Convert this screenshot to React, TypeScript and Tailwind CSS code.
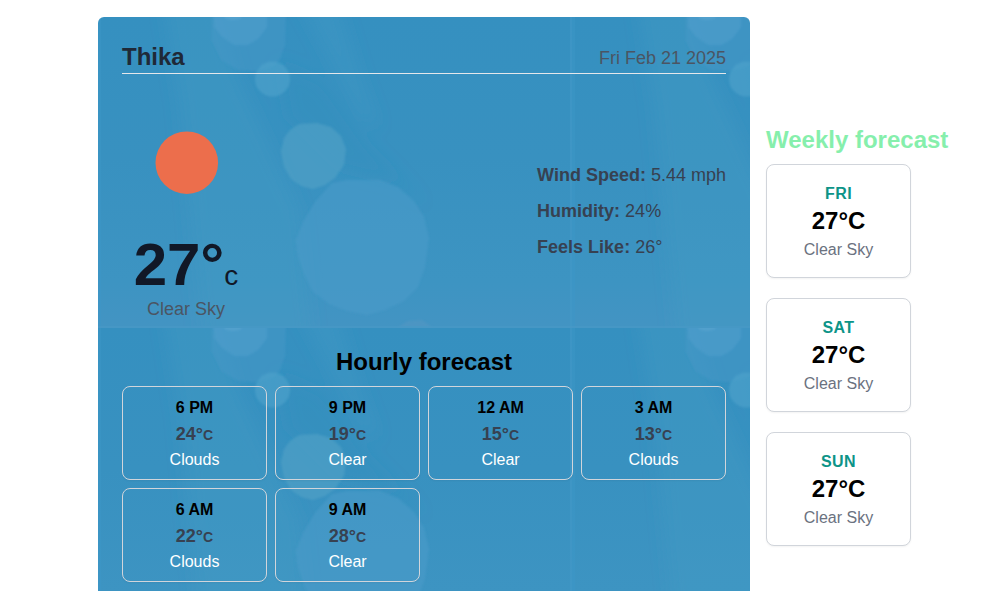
import React from "react";

type Hour = { time: string; temp: number; sky: string };

const hours: Hour[] = [
  { time: "6 PM", temp: 24, sky: "Clouds" },
  { time: "9 PM", temp: 19, sky: "Clear" },
  { time: "12 AM", temp: 15, sky: "Clear" },
  { time: "3 AM", temp: 13, sky: "Clouds" },
  { time: "6 AM", temp: 22, sky: "Clouds" },
  { time: "9 AM", temp: 28, sky: "Clear" },
];

const days = ["FRI", "SAT", "SUN"];

// Repeating blue bokeh backdrop behind the main panel.
function Backdrop() {
  return (
    <svg className="absolute inset-0 h-full w-full" aria-hidden="true">
      <defs>
        <linearGradient id="sky" x1="0" y1="0" x2="0" y2="1">
          <stop offset="0" stopColor="#3590c0" />
          <stop offset="0.45" stopColor="#3891c0" />
          <stop offset="0.85" stopColor="#3d94c2" />
          <stop offset="1" stopColor="#4394c3" />
        </linearGradient>
        <filter id="soft" x="-10%" y="-10%" width="120%" height="120%">
          <feGaussianBlur stdDeviation="1.2" />
        </filter>
        <filter id="haze" x="-30%" y="-10%" width="160%" height="120%">
          <feGaussianBlur stdDeviation="8" />
        </filter>
        <pattern id="tile" width="474" height="311" patternUnits="userSpaceOnUse">
          <rect width="474" height="311" fill="url(#sky)" />
          <g filter="url(#haze)">
            <path d="M65 -20H118L140 60L200 190L215 330H105L82 90Z" fill="#459bc5" opacity="0.34" />
            <path d="M198 -20H238L262 60L280 110L262 100L236 50Z" fill="#459bc5" opacity="0.35" />
            <path d="M180 45L225 65L270 130L330 190L300 165L240 150L190 100Z" fill="#2f8bbb" opacity="0.28" />
          </g>
          <g filter="url(#soft)">
            <path d="M114 -10H188L187 28L182 42L176 50L158 54L140 53L124 44L114 24Z" fill="#4597c8" opacity="0.5" />
            <path d="M115 -8H169V10L160 22L150 28L136 28L124 20L116 10Z" fill="#509fcb" opacity="0.6" />
            <ellipse cx="135" cy="0" rx="9" ry="3" fill="#64b0d6" opacity="0.35" />
            <circle cx="174.500" cy="62" r="17.500" fill="#4fa4cb" opacity="0.6" />
            <path d="M201 107L219 106L233 110L243 119L248 132L246 148L237 161L227 168L215 172L203 169L193 162L186 150L183 134L186 121L192 113Z" fill="#51a2c6" opacity="0.6" />
            <path d="M234 166L249 163L282 163L300 170L316 184L326 200L331 221L327 250L320 270L306 284L287 293L269 298L249 294L231 287L215 275L206 257L200 239L198 223L205 205L217 185Z" fill="#4b9bca" opacity="0.56" />
            <path d="M299 311L310 304L324 303L335 311Z" fill="#5e98c3" opacity="0.35" />
          </g>
          <rect x="472" width="2" height="311" fill="#4299c8" opacity="0.65" />
          <rect width="3" height="311" fill="#3d97c8" opacity="0.45" />
          <rect y="309" width="474" height="2" fill="#4799c6" opacity="0.7" />
        </pattern>
      </defs>
      <rect width="100%" height="100%" fill="url(#tile)" />
    </svg>
  );
}

function Detail({ label, value }: { label: string; value: string }) {
  return (
    <p>
      <span className="font-bold">{label}:</span> {value}
    </p>
  );
}

export default function App() {
  return (
    <div className="flex h-[591px] items-start gap-4 overflow-hidden bg-white pl-[98px] pt-[17px] font-['Liberation_Sans',Arial,sans-serif] text-black">
      <main className="relative h-[636px] w-[652px] shrink-0 overflow-hidden rounded-md p-6">
        <Backdrop />
        <div className="relative">
          <header className="flex items-center justify-between border-b border-[#e5e7eb]">
            <h1 className="text-2xl font-bold text-[#1f2937]">Thika</h1>
            <p className="pt-0.5 text-lg text-[#4b5563]">Fri Feb 21 2025</p>
          </header>

          <section className="mt-[25px] flex items-center justify-between">
            <div className="flex w-32 flex-col items-center">
              <svg className="size-32" viewBox="0 0 128 128" aria-hidden="true">
                <circle cx="64.800" cy="63.700" r="31.300" fill="#ec6e4c" />
              </svg>
              <p className="mt-2 text-6xl leading-none font-bold whitespace-nowrap text-[#111827]">
                27°<span className="text-[28px] leading-none font-normal">c</span>
              </p>
              <p className="text-lg text-[#4b5563]">Clear Sky</p>
            </div>
            <div className="space-y-2 text-lg text-[#374151]">
              <Detail label="Wind Speed" value="5.44 mph" />
              <Detail label="Humidity" value="24%" />
              <Detail label="Feels Like" value="26°" />
            </div>
          </section>

          <section className="mt-[23px]">
            <h2 className="text-center text-2xl font-bold">Hourly forecast</h2>
            <div className="mt-2 grid grid-cols-4 gap-2">
              {hours.map((h) => (
                <div
                  key={h.time}
                  className="rounded-lg border border-[#d1d5db] px-2 pt-[9px] pb-[7px] text-center shadow-[0_1px_2px_rgba(0,0,0,0.05)]"
                >
                  <p className="font-bold">{h.time}</p>
                  <p className="text-lg font-bold text-[#374151]">
                    {h.temp}°<span className="text-sm leading-none">C</span>
                  </p>
                  <p className="text-white">{h.sky}</p>
                </div>
              ))}
            </div>
          </section>
        </div>
      </main>

      <aside className="mt-[107px] shrink-0">
        <h2 className="text-2xl font-bold text-[#86efac]">Weekly forecast</h2>
        <div className="mt-2 flex w-[145px] flex-col gap-5">
          {days.map((day) => (
            <div
              key={day}
              className="rounded-lg border border-[#d1d5db] bg-white px-4 pt-[17px] pb-[15px] text-center shadow-[0_1px_2px_rgba(0,0,0,0.05)]"
            >
              <p className="font-bold tracking-wide text-[#0d9488]">{day}</p>
              <p className="-mt-px mb-px text-2xl font-bold">27°C</p>
              <p className="text-[#6b7280]">Clear Sky</p>
            </div>
          ))}
        </div>
      </aside>
    </div>
  );
}
